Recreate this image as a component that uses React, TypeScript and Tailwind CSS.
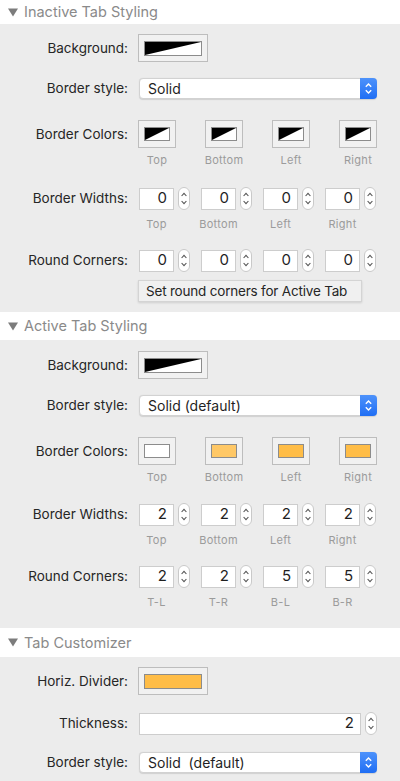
import type { ReactNode } from "react";

type Swatch = "split" | "white" | "orange" | "orangeLight";

const SWATCH_FILL: Record<Exclude<Swatch, "split">, string> = {
  white: "bg-white",
  orange: "bg-[#ffbd47]",
  orangeLight: "bg-[#ffc866]",
};

function SectionHeader({ title, height }: { title: string; height: string }) {
  return (
    <div className={`flex items-center bg-white pl-[8px] ${height}`}>
      <svg width="10" height="9" viewBox="0 0 10 9" className="shrink-0">
        <polygon points="0,0.5 10,0.5 5,8.5" fill="#7c7c7c" />
      </svg>
      <span className="ml-[6px] text-[14.5px] text-[#8a8a8a]">{title}</span>
    </div>
  );
}

function Row({ label, children, className = "" }: { label: string; children: ReactNode; className?: string }) {
  return (
    <div className={`flex items-center ${className}`}>
      <div className="w-[128px] shrink-0 text-right text-[13.5px] text-[#262626]">{label}</div>
      <div className="ml-[10px] flex items-center">{children}</div>
    </div>
  );
}

function ColorWell({ swatch, wide = false }: { swatch: Swatch; wide?: boolean }) {
  return (
    <div
      className={`flex h-[28px] items-center justify-center border border-[#bdbdbd] bg-[#f1f1f1] ${
        wide ? "w-[70px]" : "w-[38px]"
      }`}
    >
      {swatch === "split" ? (
        <svg
          width={wide ? 58 : 26}
          height={wide ? 15 : 14}
          viewBox={wide ? "0 0 58 15" : "0 0 26 14"}
          className="border border-[#8c8c8c] bg-white"
          preserveAspectRatio="none"
        >
          <polygon points={wide ? "0,0 58,0 0,15" : "0,0 26,0 0,14"} fill="#000" />
        </svg>
      ) : (
        <div
          className={`border border-[#8c8c8c] ${SWATCH_FILL[swatch]} ${
            wide ? "h-[15px] w-[58px]" : "h-[14px] w-[26px]"
          }`}
        />
      )}
    </div>
  );
}

function Stepper() {
  return (
    <svg width="12" height="23" viewBox="0 0 12 23" className="shrink-0">
      <rect x="0.5" y="0.5" width="11" height="22" rx="5.5" fill="#fff" stroke="#c9c9c9" />
      <path d="M3.6 9 L6 6.3 L8.4 9" fill="none" stroke="#555" strokeWidth="1.1" />
      <path d="M3.6 14 L6 16.7 L8.4 14" fill="none" stroke="#555" strokeWidth="1.1" />
    </svg>
  );
}

function NumField({ value, width = "w-[35px]" }: { value: number; width?: string }) {
  return (
    <div className="flex items-center">
      <div
        className={`flex h-[22px] items-center justify-end border border-[#cdcdcd] bg-white pr-[6px] text-[15px] text-[#1f1f1f] ${width}`}
      >
        {value}
      </div>
      <div className="ml-[4px]">
        <Stepper />
      </div>
    </div>
  );
}

function Popup({ value }: { value: string }) {
  return (
    <div className="flex h-[21px] w-[238px] items-stretch rounded-[4px] border border-[#d2d2d2] bg-white shadow-[0_0.5px_1px_rgba(0,0,0,0.12)]">
      <div className="flex flex-1 items-center whitespace-pre pl-[8px] text-[14px] text-[#1f1f1f]">{value}</div>
      <div className="-my-px -mr-px flex w-[17px] items-center justify-center rounded-r-[4px] bg-gradient-to-b from-[#4d92fb] to-[#1f6ef4]">
        <svg width="9" height="13" viewBox="0 0 9 13">
          <path d="M1.8 4.8 L4.5 2.1 L7.2 4.8" fill="none" stroke="#fff" strokeWidth="1.4" />
          <path d="M1.8 8.2 L4.5 10.9 L7.2 8.2" fill="none" stroke="#fff" strokeWidth="1.4" />
        </svg>
      </div>
    </div>
  );
}

function WellRow({ swatches }: { swatches: Swatch[] }) {
  return (
    <Row label="Border Colors:">
      <div className="flex gap-[29px]">
        {swatches.map((s, i) => (
          <ColorWell key={i} swatch={s} />
        ))}
      </div>
    </Row>
  );
}

function WellLabels({ className = "" }: { className?: string }) {
  return (
    <div className={`ml-[138px] flex gap-[29px] ${className}`}>
      {["Top", "Bottom", "Left", "Right"].map((t) => (
        <div key={t} className="flex w-[38px] justify-center whitespace-nowrap text-[11px] leading-[14px] tracking-[0.3px] text-[#9b9b9b]">
          {t}
        </div>
      ))}
    </div>
  );
}

function FieldRow({ label, values, className = "" }: { label: string; values: number[]; className?: string }) {
  return (
    <Row label={label} className={className}>
      <div className="ml-px flex gap-[11px]">
        {values.map((v, i) => (
          <NumField key={i} value={v} />
        ))}
      </div>
    </Row>
  );
}

function FieldLabels({ items, className = "" }: { items: string[]; className?: string }) {
  return (
    <div className={`ml-[139px] flex gap-[11px] ${className}`}>
      {items.map((t) => (
        <div key={t} className="w-[51px]">
          <div className="flex w-[35px] justify-center whitespace-nowrap text-[11px] leading-[14px] tracking-[0.3px] text-[#9b9b9b]">
            {t}
          </div>
        </div>
      ))}
    </div>
  );
}

const SIDES = ["Top", "Bottom", "Left", "Right"];

export default function App() {
  return (
    <div className="h-[781px] w-[400px] overflow-hidden bg-[#ececec] font-['Inter','Noto_Sans',sans-serif] antialiased">
      <SectionHeader title="Inactive Tab Styling" height="h-[24px]" />
      <div className="pb-[10px] pt-[10px]">
        <Row label="Background:">
          <ColorWell swatch="split" wide />
        </Row>
        <Row label="Border style:" className="mt-[16px]">
          <div className="ml-px">
            <Popup value="Solid" />
          </div>
        </Row>
        <div className="mt-[21px]">
          <WellRow swatches={["split", "split", "split", "split"]} />
        </div>
        <WellLabels className="mt-[5px]" />
        <FieldRow label="Border Widths:" values={[0, 0, 0, 0]} className="mt-[20px]" />
        <FieldLabels items={SIDES} className="mt-[7px]" />
        <FieldRow label="Round Corners:" values={[0, 0, 0, 0]} className="mt-[18px]" />
        <div className="ml-[138px] mt-[8px] flex h-[22px] w-[224px] items-center whitespace-nowrap border border-[#d4d4d4] bg-[#f0f0f0] pl-[7px] text-[13.5px] tracking-[-0.2px] text-[#262626] shadow-[0_1px_2px_rgba(0,0,0,0.12)]">
          Set round corners for Active Tab
        </div>
      </div>

      <SectionHeader title="Active Tab Styling" height="h-[28px]" />
      <div className="pb-[19px] pt-[11px]">
        <Row label="Background:">
          <ColorWell swatch="split" wide />
        </Row>
        <Row label="Border style:" className="mt-[16px]">
          <div className="ml-px">
            <Popup value="Solid (default)" />
          </div>
        </Row>
        <div className="mt-[21px]">
          <WellRow swatches={["white", "orangeLight", "orange", "orange"]} />
        </div>
        <WellLabels className="mt-[5px]" />
        <FieldRow label="Border Widths:" values={[2, 2, 2, 2]} className="mt-[19px]" />
        <FieldLabels items={SIDES} className="mt-[7px]" />
        <FieldRow label="Round Corners:" values={[2, 2, 5, 5]} className="mt-[18px]" />
        <FieldLabels items={["T-L", "T-R", "B-L", "B-R"]} className="mt-[7px]" />
      </div>

      <SectionHeader title="Tab Customizer" height="h-[29px]" />
      <div className="pt-[10px]">
        <Row label="Horiz. Divider:">
          <ColorWell swatch="orange" wide />
        </Row>
        <Row label="Thickness:" className="mt-[17px]">
          <div className="ml-px">
            <NumField value={2} width="w-[222px]" />
          </div>
        </Row>
        <Row label="Border style:" className="mt-[17px]">
          <div className="ml-px">
            <Popup value="Solid  (default)" />
          </div>
        </Row>
      </div>
    </div>
  );
}
